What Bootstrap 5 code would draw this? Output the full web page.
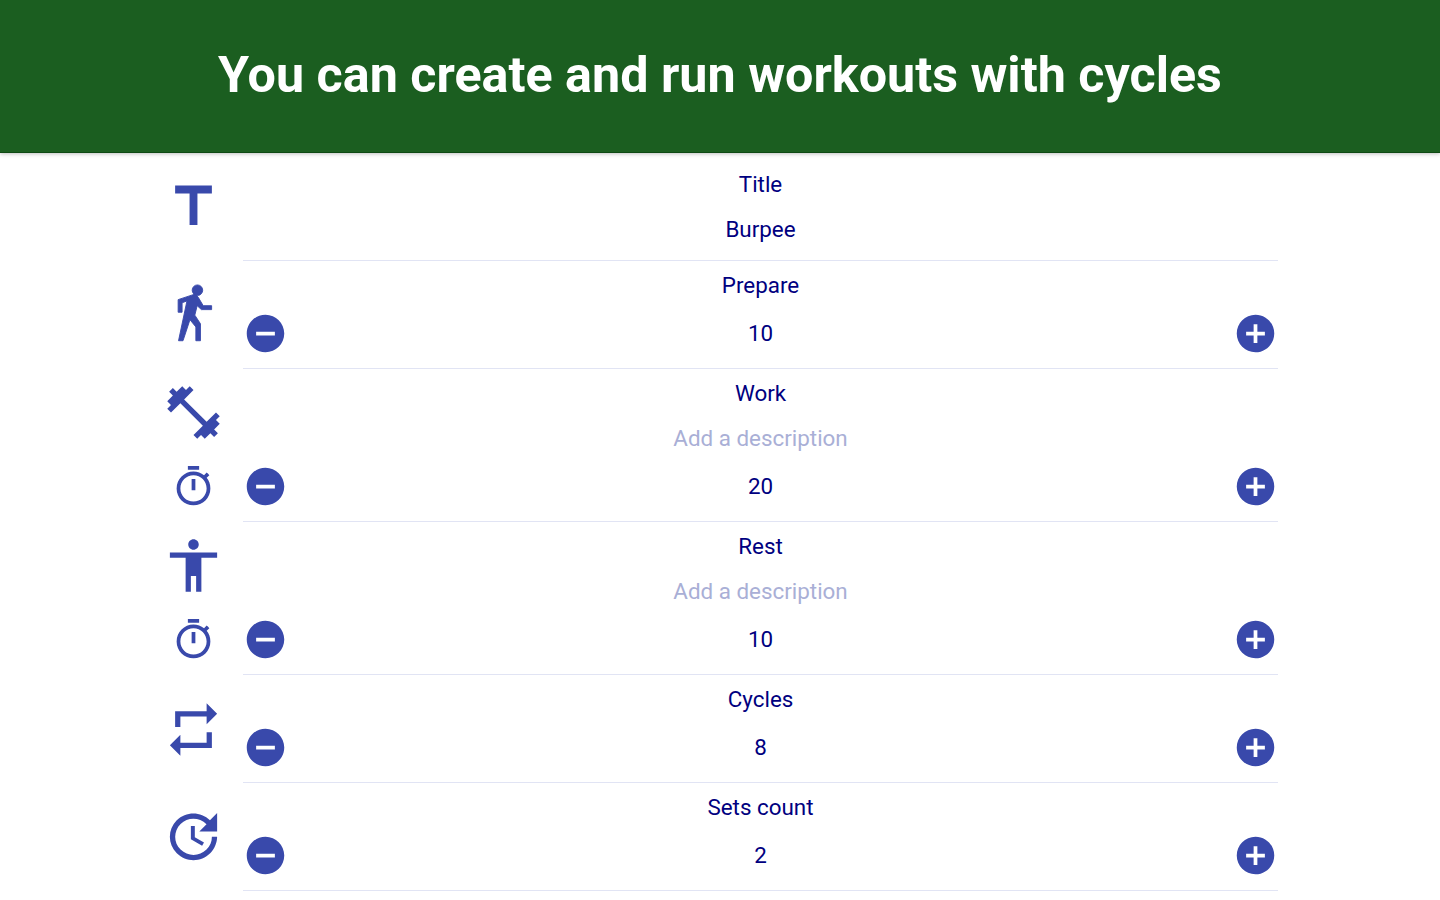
<!DOCTYPE html>
<html lang="en">
<head>
    <meta charset="UTF-8">
    <title>Workouts with cycles</title>
    <link href="https://cdn.jsdelivr.net/npm/bootstrap@5.3.0/dist/css/bootstrap.min.css" rel="stylesheet">
    <style>
        html, body {
            height: 900px;
            overflow: hidden;
        }
        body {
            background: #fff;
            font-family: 'Roboto', 'Liberation Sans', sans-serif;
            color: #00007f;
        }
        .hero {
            height: 153px;
            background: #1b5e20;
            border-bottom: 1px solid #0f4a14;
            box-shadow: 0 1px 4px rgba(0,0,0,0.25);
        }
        .hero h1 {
            font-family: 'Roboto', sans-serif;
            font-size: 50.25px;
            font-weight: 700;
            color: #fff;
            margin: -1px 0 0;
        }
        .sheet {
            padding-top: 1px;
            padding-left: 143px;
            width: 1278px;
        }
        .icon-col {
            width: 100px;
            flex: none;
        }
        .icon-fill {
            fill: #3949ab;
            display: block;
        }
        .walker {
            stroke: #3949ab;
            stroke-width: .35;
        }
        .lift-s {
            padding-bottom: 2px;
        }
        .lift {
            padding-bottom: 6px;
        }
        .lift-m {
            padding-bottom: 7px;
        }
        .time-slot {
            height: 48px;
            margin-bottom: 12px;
        }
        .fields {
            border-bottom: 1px solid #e1e4f4;
            font-size: 22.4px;
            padding-bottom: 11px;
        }
        .fields.first {
            padding-top: 6px;
            padding-bottom: 7px;
        }
        .line-tall {
            height: 48px;
        }
        .line-mid {
            height: 45px;
            padding-bottom: 2px;
        }
        .nudge {
            padding-top: 2px;
        }
        .hint {
            color: #a9afd6;
        }
        .round-btn {
            width: 45px;
            height: 45px;
            line-height: 0;
        }
    </style>
</head>
<body>
    <svg width="0" height="0" class="position-absolute">
        <defs>
            <symbol id="i-title" viewBox="0 0 24 24"><path d="M5 4v3h5.5v12h3V7H19V4z"/></symbol>
            <symbol id="i-walk" viewBox="0 0 24 24"><path d="M13.5 5.5a2 2 0 1 0 0-4 2 2 0 0 0 0 4zM6.15 7.1v4.8h1.5V8.3l1.85-.7-3.2 15.15H8l2.65-8 2.25 2.75v5.25h1.75V16.3L12.5 13l.9-3.6 1.6 1.5h3.9V9.4h-3.2l-1.9-3.2q-.6-1-1.6-1.1z"/></symbol>
            <symbol id="i-gym" viewBox="0 0 24 24"><path d="M20.57 14.86L22 13.43 20.57 12 17 15.57 8.43 7 12 3.43 10.57 2 9.14 3.43 7.71 2 5.57 4.14 4.14 2.71 2.71 4.14l1.43 1.43L2 7.71l1.43 1.43L2 10.57 3.43 12 7 8.43 15.57 17 12 20.57 13.43 22l1.43-1.43L16.29 22l2.14-2.14 1.43 1.43 1.43-1.43-1.43-1.43L22 16.29z"/></symbol>
            <symbol id="i-timer" viewBox="0 0 24 24"><path d="M15 1H9v2h6V1zm-4 13h2V8h-2v6zm8.03-6.61l1.42-1.42c-.43-.51-.9-.99-1.41-1.41l-1.42 1.42C16.07 4.74 14.12 4 12 4c-4.97 0-9 4.03-9 9s4.02 9 9 9 9-4.03 9-9c0-2.12-.74-4.07-1.97-5.61zM12 20c-3.87 0-7-3.13-7-7s3.13-7 7-7 7 3.13 7 7-3.13 7-7 7z"/></symbol>
            <symbol id="i-body" viewBox="0 0 24 24"><path d="M12 2c1.1 0 2 .9 2 2s-.9 2-2 2-2-.9-2-2 .9-2 2-2zm9 7h-6v13h-2v-6h-2v6H9V9H3V7h18v2z"/></symbol>
            <symbol id="i-repeat" viewBox="0 0 24 24"><path d="M7 7h10v3l4-4-4-4v3H5v6h2V7zm10 10H7v-3l-4 4 4 4v-3h12v-6h-2v4z"/></symbol>
            <symbol id="i-update" viewBox="0 0 24 24"><path d="M21 10.12h-6.78l2.74-2.82c-2.73-2.7-7.15-2.8-9.88-.1-2.73 2.71-2.73 7.08 0 9.79s7.15 2.71 9.88 0C18.32 15.65 19 14.08 19 12.1h2c0 1.98-.88 4.55-2.64 6.29-3.51 3.48-9.21 3.48-12.72 0-3.5-3.47-3.53-9.11-.02-12.58s9.14-3.47 12.65 0L21 3v7.12zM12.5 8v4.25l3.5 2.08-.72 1.21L11 13V8h1.5z"/></symbol>
            <symbol id="i-minus" viewBox="0 0 24 24"><path d="M12 2C6.48 2 2 6.48 2 12s4.48 10 10 10 10-4.48 10-10S17.52 2 12 2zm5 11H7v-2h10v2z"/></symbol>
            <symbol id="i-plus" viewBox="0 0 24 24"><path d="M12 2C6.48 2 2 6.48 2 12s4.48 10 10 10 10-4.48 10-10S17.52 2 12 2zm5 11h-4v4h-2v-4H7v-2h4V7h2v4h4v2z"/></symbol>
        </defs>
    </svg>

    <header class="hero d-flex align-items-center justify-content-center">
        <h1>You can create and run workouts with cycles</h1>
    </header>

    <main class="sheet">
        <!-- Title -->
        <section class="d-flex">
            <div class="icon-col lift-s d-flex align-items-center justify-content-center">
                <svg class="icon-fill" width="63" height="63"><use href="#i-title"/></svg>
            </div>
            <div class="fields first flex-grow-1 text-center">
                <div class="line-tall nudge d-flex align-items-center justify-content-center">Title</div>
                <div class="line-mid d-flex align-items-center justify-content-center">Burpee</div>
            </div>
        </section>

        <!-- Prepare -->
        <section class="d-flex">
            <div class="icon-col lift d-flex align-items-center justify-content-center">
                <svg class="icon-fill walker" width="63" height="63"><use href="#i-walk"/></svg>
            </div>
            <div class="fields flex-grow-1 text-center">
                <div class="line-tall nudge d-flex align-items-center justify-content-center">Prepare</div>
                <div class="line-tall d-flex align-items-center justify-content-between">
                    <button type="button" class="btn round-btn p-0 border-0"><svg class="icon-fill" width="45" height="45"><use href="#i-minus"/></svg></button>
                    <span class="nudge">10</span>
                    <button type="button" class="btn round-btn p-0 border-0"><svg class="icon-fill" width="45" height="45"><use href="#i-plus"/></svg></button>
                </div>
            </div>
        </section>

        <!-- Work -->
        <section class="d-flex">
            <div class="icon-col d-flex flex-column align-items-center">
                <div class="lift-m flex-grow-1 d-flex align-items-center">
                    <svg class="icon-fill" width="63" height="63"><use href="#i-gym"/></svg>
                </div>
                <div class="time-slot d-flex align-items-center">
                    <svg class="icon-fill" width="45" height="45"><use href="#i-timer"/></svg>
                </div>
            </div>
            <div class="fields flex-grow-1 text-center">
                <div class="line-tall nudge d-flex align-items-center justify-content-center">Work</div>
                <div class="line-mid hint d-flex align-items-center justify-content-center">Add a description</div>
                <div class="line-tall d-flex align-items-center justify-content-between">
                    <button type="button" class="btn round-btn p-0 border-0"><svg class="icon-fill" width="45" height="45"><use href="#i-minus"/></svg></button>
                    <span class="nudge">20</span>
                    <button type="button" class="btn round-btn p-0 border-0"><svg class="icon-fill" width="45" height="45"><use href="#i-plus"/></svg></button>
                </div>
            </div>
        </section>

        <!-- Rest -->
        <section class="d-flex">
            <div class="icon-col d-flex flex-column align-items-center">
                <div class="lift-m flex-grow-1 d-flex align-items-center">
                    <svg class="icon-fill" width="63" height="63"><use href="#i-body"/></svg>
                </div>
                <div class="time-slot d-flex align-items-center">
                    <svg class="icon-fill" width="45" height="45"><use href="#i-timer"/></svg>
                </div>
            </div>
            <div class="fields flex-grow-1 text-center">
                <div class="line-tall nudge d-flex align-items-center justify-content-center">Rest</div>
                <div class="line-mid hint d-flex align-items-center justify-content-center">Add a description</div>
                <div class="line-tall d-flex align-items-center justify-content-between">
                    <button type="button" class="btn round-btn p-0 border-0"><svg class="icon-fill" width="45" height="45"><use href="#i-minus"/></svg></button>
                    <span class="nudge">10</span>
                    <button type="button" class="btn round-btn p-0 border-0"><svg class="icon-fill" width="45" height="45"><use href="#i-plus"/></svg></button>
                </div>
            </div>
        </section>

        <!-- Cycles -->
        <section class="d-flex">
            <div class="icon-col d-flex align-items-center justify-content-center">
                <svg class="icon-fill" width="63" height="63"><use href="#i-repeat"/></svg>
            </div>
            <div class="fields flex-grow-1 text-center">
                <div class="line-tall nudge d-flex align-items-center justify-content-center">Cycles</div>
                <div class="line-tall d-flex align-items-center justify-content-between">
                    <button type="button" class="btn round-btn p-0 border-0"><svg class="icon-fill" width="45" height="45"><use href="#i-minus"/></svg></button>
                    <span class="nudge">8</span>
                    <button type="button" class="btn round-btn p-0 border-0"><svg class="icon-fill" width="45" height="45"><use href="#i-plus"/></svg></button>
                </div>
            </div>
        </section>

        <!-- Sets count -->
        <section class="d-flex">
            <div class="icon-col lift-s d-flex align-items-center justify-content-center">
                <svg class="icon-fill" width="63" height="63"><use href="#i-update"/></svg>
            </div>
            <div class="fields flex-grow-1 text-center">
                <div class="line-tall nudge d-flex align-items-center justify-content-center">Sets count</div>
                <div class="line-tall d-flex align-items-center justify-content-between">
                    <button type="button" class="btn round-btn p-0 border-0"><svg class="icon-fill" width="45" height="45"><use href="#i-minus"/></svg></button>
                    <span class="nudge">2</span>
                    <button type="button" class="btn round-btn p-0 border-0"><svg class="icon-fill" width="45" height="45"><use href="#i-plus"/></svg></button>
                </div>
            </div>
        </section>
    </main>

    <script src="https://cdn.jsdelivr.net/npm/bootstrap@5.3.0/dist/js/bootstrap.bundle.min.js"></script>
</body>
</html>
